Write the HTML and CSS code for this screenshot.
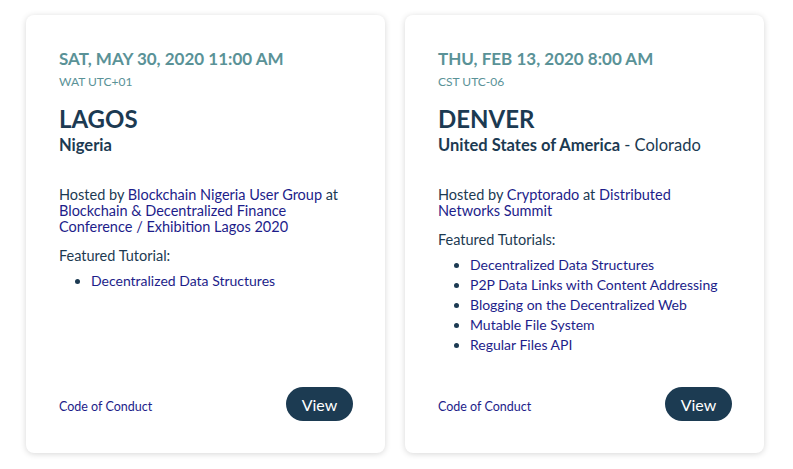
FILE: index.html
```html
<!DOCTYPE html>
<html lang="en">
<head>
  <meta charset="UTF-8">
  <title>Events</title>
  <link rel="stylesheet" href="styles.css">
</head>
<body>

  <div class="events">
    <div class="card">
      <div class="fecha">SAT, MAY 30, 2020 11:00 AM</div>
      <div class="zona">WAT UTC+01</div>
      <h2 class="ciudad">LAGOS</h2>
      <div class="pais"><strong>Nigeria</strong></div>
      <p class="host">Hosted by <a href="#">Blockchain Nigeria User Group</a> at <a href="#">Blockchain &amp; Decentralized Finance Conference / Exhibition Lagos 2020</a></p>
      <p class="featured">Featured Tutorial:</p>
      <ul class="tutoriales">
        <li><a href="#">Decentralized Data Structures</a></li>
      </ul>
      <div class="pie">
        <a href="#" class="conducta">Code of Conduct</a>
        <button>View</button>
      </div>
    </div>

    <div class="card">
      <div class="fecha">THU, FEB 13, 2020 8:00 AM</div>
      <div class="zona">CST UTC-06</div>
      <h2 class="ciudad">DENVER</h2>
      <div class="pais"><strong>United States of America</strong> - Colorado</div>
      <p class="host">Hosted by <a href="#">Cryptorado</a> at <a href="#">Distributed Networks Summit</a></p>
      <p class="featured">Featured Tutorials:</p>
      <ul class="tutoriales">
        <li><a href="#">Decentralized Data Structures</a></li>
        <li><a href="#">P2P Data Links with Content Addressing</a></li>
        <li><a href="#">Blogging on the Decentralized Web</a></li>
        <li><a href="#">Mutable File System</a></li>
        <li><a href="#">Regular Files API</a></li>
      </ul>
      <div class="pie">
        <a href="#" class="conducta">Code of Conduct</a>
        <button>View</button>
      </div>
    </div>
  </div>

</body>
</html>
```

FILE: styles.css
```css
body {
  font-family: 'Lato', sans-serif;
  background: white;
  color: #1c3a52;
  margin: 0;
  padding: 0;
}

.events {
  display: flex;
  gap: 20px;
  padding: 15px 26px;
}

.card {
  width: 359px;
  height: 438px;
  box-sizing: border-box;
  padding: 33px 32px 32px 33px;
  background: white;
  border-radius: 8px;
  box-shadow: 0 1px 6px rgba(0, 0, 0, 0.16);
  display: flex;
  flex-direction: column;
}

a {
  color: #1d1d8a;
  text-decoration: none;
}

.fecha {
  font-size: 17px;
  font-weight: bold;
  color: #5a9297;
  line-height: 22px;
}

.zona {
  font-size: 12px;
  color: #5a9297;
  line-height: 16px;
  margin-top: 4px;
}

.ciudad {
  font-size: 24px;
  font-weight: bold;
  line-height: 28px;
  margin: 15px 0 0 0;
}

.pais {
  font-size: 16.5px;
  line-height: 20px;
  margin-top: 2px;
}

.host {
  font-size: 14.5px;
  line-height: 16px;
  max-width: 285px;
  margin: 32px 0 0 0;
}

.featured {
  font-size: 14.5px;
  line-height: 16px;
  margin: 13px 0 0 0;
}

.tutoriales {
  font-size: 14px;
  line-height: 20px;
  margin: 7px 0 0 0;
  padding-left: 32px;
}

.pie {
  margin-top: auto;
  display: flex;
  justify-content: space-between;
  align-items: center;
}

.conducta {
  font-size: 12.5px;
  margin-top: 4px;
}

button {
  background-color: #1c3b52;
  color: white;
  font-family: 'Lato', sans-serif;
  font-size: 16px;
  font-weight: normal;
  width: 67px;
  height: 34px;
  border: none;
  border-radius: 17px;
  cursor: pointer;
}
```
